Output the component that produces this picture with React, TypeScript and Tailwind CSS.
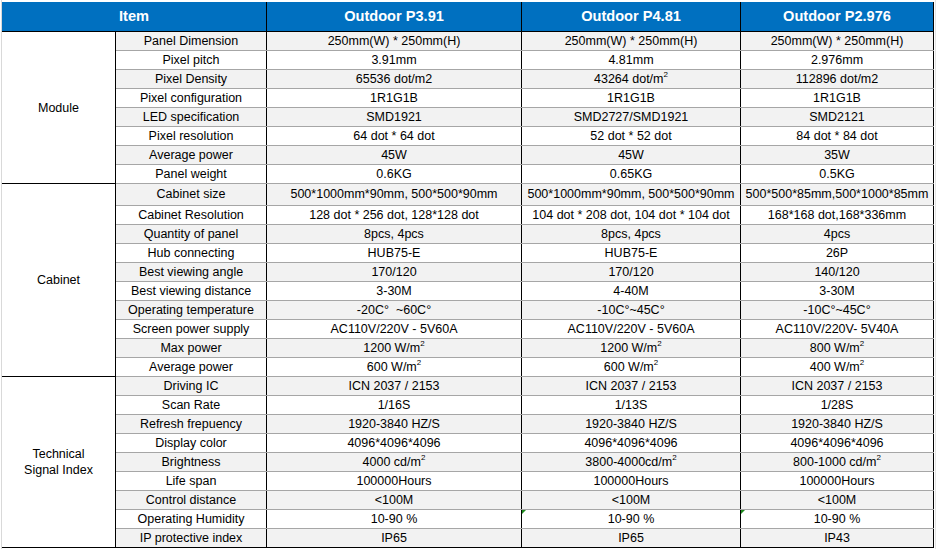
import type { ReactNode } from 'react';

type Row = {
  label: string;
  cells: [ReactNode, ReactNode, ReactNode];
  tall?: boolean;
  flag?: boolean;
};

type Group = { name: ReactNode; rows: Row[] };

const m2 = (
  <>
    m<sup className="text-[8px]">2</sup>
  </>
);

const GROUPS: Group[] = [
  {
    name: 'Module',
    rows: [
      { label: 'Panel Dimension', cells: ['250mm(W) * 250mm(H)', '250mm(W) * 250mm(H)', '250mm(W) * 250mm(H)'] },
      { label: 'Pixel pitch', cells: ['3.91mm', '4.81mm', '2.976mm'] },
      { label: 'Pixel Density', cells: ['65536 dot/m2', <>43264 dot/{m2}</>, '112896 dot/m2'] },
      { label: 'Pixel configuration', cells: ['1R1G1B', '1R1G1B', '1R1G1B'] },
      { label: 'LED specification', cells: ['SMD1921', 'SMD2727/SMD1921', 'SMD2121'] },
      { label: 'Pixel resolution', cells: ['64 dot * 64 dot', '52 dot * 52 dot', '84 dot * 84 dot'] },
      { label: 'Average power', cells: ['45W', '45W', '35W'] },
      { label: 'Panel weight', cells: ['0.6KG', '0.65KG', '0.5KG'] },
    ],
  },
  {
    name: 'Cabinet',
    rows: [
      {
        label: 'Cabinet size',
        tall: true,
        cells: ['500*1000mm*90mm, 500*500*90mm', '500*1000mm*90mm, 500*500*90mm', '500*500*85mm,500*1000*85mm'],
      },
      {
        label: 'Cabinet Resolution',
        cells: ['128 dot * 256 dot, 128*128 dot', '104 dot * 208 dot, 104 dot * 104 dot', '168*168 dot,168*336mm'],
      },
      { label: 'Quantity of panel', cells: ['8pcs, 4pcs', '8pcs, 4pcs', '4pcs'] },
      { label: 'Hub connecting', cells: ['HUB75-E', 'HUB75-E', '26P'] },
      { label: 'Best viewing angle', cells: ['170/120', '170/120', '140/120'] },
      { label: 'Best viewing distance', cells: ['3-30M', '4-40M', '3-30M'] },
      { label: 'Operating temperature', cells: ['-20C°\u00a0\u00a0~60C°', '-10C°~45C°', '-10C°~45C°'] },
      { label: 'Screen power supply', cells: ['AC110V/220V - 5V60A', 'AC110V/220V - 5V60A', 'AC110V/220V- 5V40A'] },
      { label: 'Max power', cells: [<>1200 W/{m2}</>, <>1200 W/{m2}</>, <>800 W/{m2}</>] },
      { label: 'Average power', cells: [<>600 W/{m2}</>, <>600 W/{m2}</>, <>400 W/{m2}</>] },
    ],
  },
  {
    name: (
      <>
        Technical
        <br />
        Signal Index
      </>
    ),
    rows: [
      { label: 'Driving IC', cells: ['ICN 2037 / 2153', 'ICN 2037 / 2153', 'ICN 2037 / 2153'] },
      { label: 'Scan Rate', cells: ['1/16S', '1/13S', '1/28S'] },
      { label: 'Refresh frepuency', cells: ['1920-3840 HZ/S', '1920-3840 HZ/S', '1920-3840 HZ/S'] },
      { label: 'Display color', cells: ['4096*4096*4096', '4096*4096*4096', '4096*4096*4096'] },
      { label: 'Brightness', cells: [<>4000 cd/{m2}</>, <>3800-4000cd/{m2}</>, <>800-1000 cd/{m2}</>] },
      { label: 'Life span', cells: ['100000Hours', '100000Hours', '100000Hours'] },
      { label: 'Control distance', cells: ['<100M', '<100M', '<100M'] },
      { label: 'Operating Humidity', flag: true, cells: ['10-90 %', '10-90 %', '10-90 %'] },
      { label: 'IP protective index', cells: ['IP65', 'IP65', 'IP43'] },
    ],
  },
];

const COL_W = ['w-[255px]', 'w-[219px]', 'w-[193px]'];

function ErrorMark() {
  return (
    <span className="absolute left-0 top-0 h-0 w-0 border-t-[4px] border-r-[4px] border-t-[#1e8a1e] border-r-transparent" />
  );
}

function DataRow({ row, index, last }: { row: Row; index: number; last: boolean }) {
  const bg = index % 2 === 0 ? 'bg-[#f2f2f2]' : 'bg-white';
  const line = last ? 'border-b-black' : 'border-b-[#a6a6a6]';
  return (
    <div className={`flex ${row.tall ? 'h-[22px]' : 'h-[19px]'} ${bg} border-b ${line}`}>
      <div className="flex w-[151px] items-center justify-center border-r border-r-black">{row.label}</div>
      {row.cells.map((c, i) => (
        <div key={i} className={`relative flex ${COL_W[i]} items-center justify-center border-r border-r-black`}>
          {row.flag && i > 0 && <ErrorMark />}
          {c}
        </div>
      ))}
    </div>
  );
}

export default function App() {
  let counter = 0;
  return (
    <div className="relative h-[549px] w-[936px] overflow-hidden bg-white font-['Liberation_Sans',Arial,sans-serif] text-[12.5px] leading-none text-black">
      <div className="flex h-full">
        <div className="w-[1px] shrink-0" />
        <div className="w-[1px] shrink-0 bg-[#d9d9d9]" />
        <div className="flex flex-col pt-[2px]">
          <div className="flex h-[30px] border-b border-b-black bg-[#0070c0] text-[14.6px] font-bold text-white">
            <div className="flex w-[265px] items-center justify-center border-r border-r-black">Item</div>
            <div className="flex w-[255px] items-center justify-center border-r border-r-black">Outdoor P3.91</div>
            <div className="flex w-[219px] items-center justify-center border-r border-r-black">Outdoor P4.81</div>
            <div className="flex w-[193px] items-center justify-center border-r border-r-black">Outdoor P2.976</div>
          </div>
          {GROUPS.map((g, gi) => (
            <div key={gi} className="flex">
              <div className="flex w-[114px] items-center justify-center border-r border-b border-black bg-white text-center leading-[16px]">
                <span>{g.name}</span>
              </div>
              <div className="flex flex-col">
                {g.rows.map((r, ri) => {
                  const idx = counter++;
                  return (
                    <DataRow
                      key={ri}
                      row={r}
                      index={idx}
                      last={gi === GROUPS.length - 1 && ri === g.rows.length - 1}
                    />
                  );
                })}
              </div>
            </div>
          ))}
        </div>
        <div className="w-[1px] shrink-0" />
        <div className="w-[1px] shrink-0 bg-[#e3e3e3]" />
      </div>
    </div>
  );
}
